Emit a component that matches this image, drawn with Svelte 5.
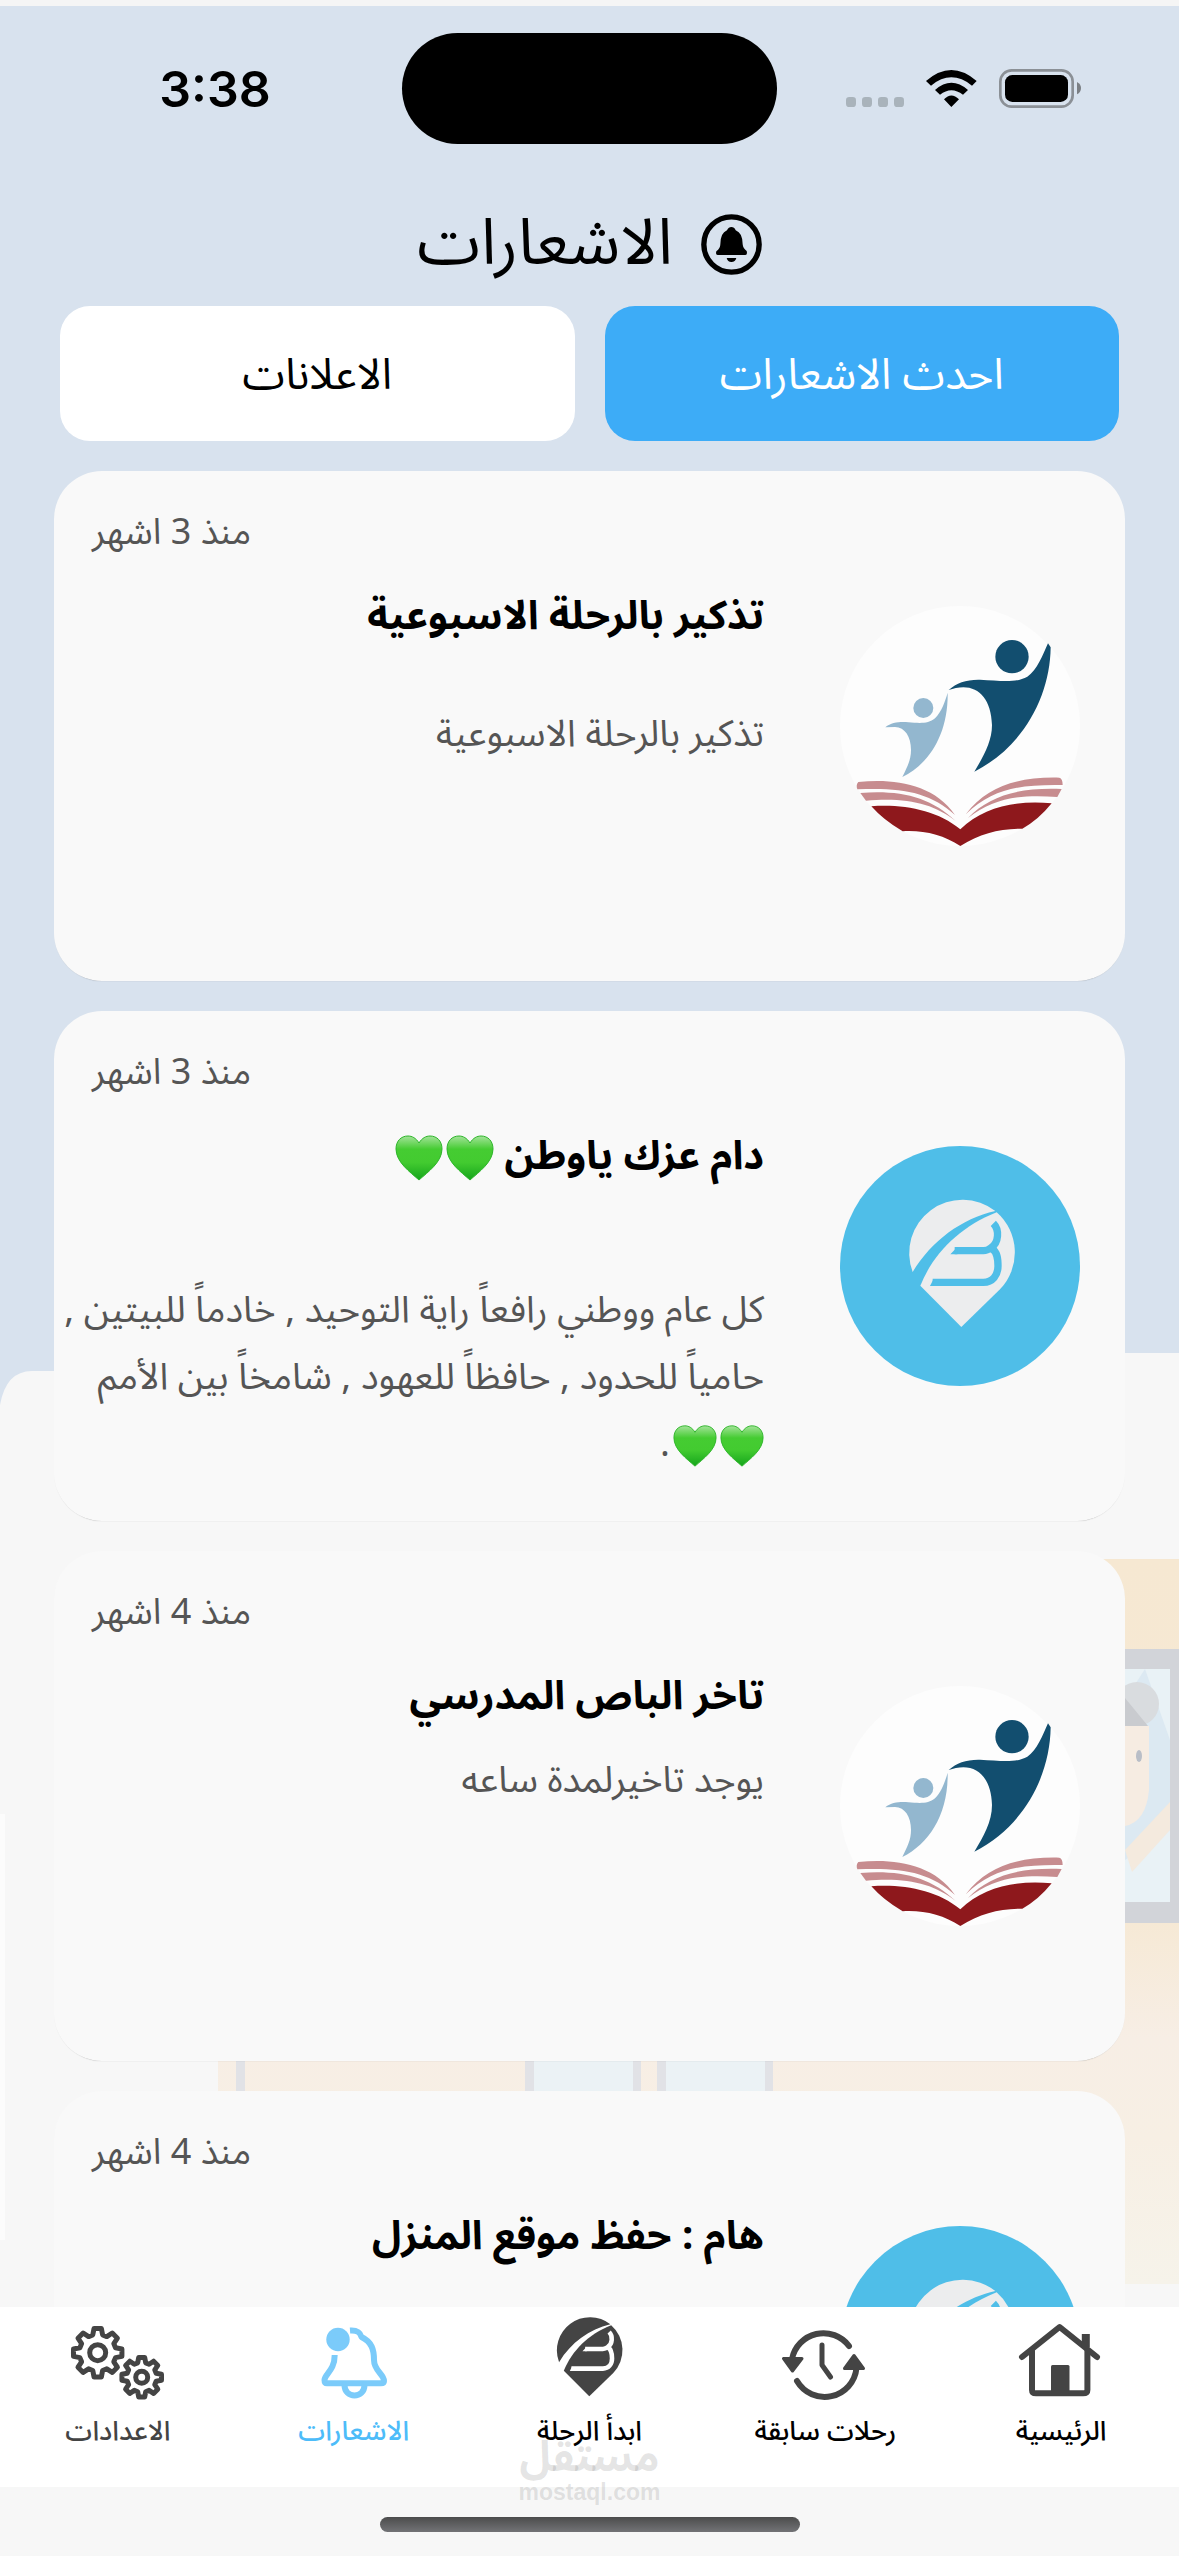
<script>
  let activeTab = $state('latest');

  const tabs = [
    { id: 'latest', label: 'احدث الاشعارات' },
    { id: 'ads', label: 'الاعلانات' }
  ];

  const notifications = [
    { logo: 'school', time: 'منذ 3 اشهر', title: 'تذكير بالرحلة الاسبوعية', hearts: 0, gap: 'medium', lines: ['تذكير بالرحلة الاسبوعية'] },
    {
      logo: 'bus',
      time: 'منذ 3 اشهر',
      title: 'دام عزك ياوطن',
      hearts: 2,
      gap: 'large',
      lines: ['كل عام ووطني رافعاً راية التوحيد , خادماً للبيتين ,', 'حامياً للحدود , حافظاً للعهود , شامخاً بين الأمم'],
      closing: true
    },
    { logo: 'school', time: 'منذ 4 اشهر', title: 'تاخر الباص المدرسي', hearts: 0, gap: 'small', lines: ['يوجد تاخيرلمدة ساعه'] },
    { logo: 'bus', time: 'منذ 4 اشهر', title: 'هام : حفظ موقع المنزل', hearts: 0, gap: 'small', lines: [] }
  ];

  const links = [
    { icon: 'home', label: 'الرئيسية', tone: 'dark' },
    { icon: 'history', label: 'رحلات سابقة', tone: 'dark' },
    { icon: 'pin', label: 'ابدأ الرحلة', tone: 'dark' },
    { icon: 'bell', label: 'الاشعارات', tone: 'active' },
    { icon: 'gears', label: 'الاعدادات', tone: 'soft' }
  ];

  // eight-toothed gear outline
  function gear(cx, cy, outer, inner) {
    const points = [];
    for (let i = 0; i < 8; i++) {
      const a = (i * Math.PI) / 4 - Math.PI / 2;
      for (const [da, r] of [[-0.27, inner], [-0.15, outer], [0.15, outer], [0.27, inner]]) {
        points.push(`${(cx + r * Math.cos(a + da)).toFixed(2)} ${(cy + r * Math.sin(a + da)).toFixed(2)}`);
      }
    }
    return `M${points.join('L')}Z`;
  }
</script>

{#snippet heart()}
  <svg class="heart" viewBox="0 0 48 48" role="img" aria-label="💚">
    <defs>
      <linearGradient id="heartFill" x1="0" y1="0" x2="0" y2="1">
        <stop offset="0" stop-color="#a4e39a" />
        <stop offset="0.3" stop-color="#45cc32" />
        <stop offset="0.6" stop-color="#43cb30" />
        <stop offset="1" stop-color="#15a51c" />
      </linearGradient>
    </defs>
    <path d="M24 9C21 4 17 2 13 2C6 2 1 7 1 15C1 28 15 38 24 46C33 38 47 28 47 15C47 7 42 2 35 2C31 2 27 4 24 9Z" fill="url(#heartFill)" stroke="#2db52a" />
  </svg>
{/snippet}

{#snippet pinMark(fill, cut)}
  <path d="M278 426A160 160 0 0 1 526 243C425 266 335 332 278 426Z" {fill} />
  <path d="M301 467C340 370 420 290 530 247A160 160 0 0 1 540 478L424 591Z" {fill} />
  <g fill="none" stroke={cut} stroke-width="22">
    <path d="M520 280C538 298 538 338 512 354Q502 362 490 362H404" />
    <path d="M515 355C532 366 534 385 534 408C534 435 518 457 490 457H338" />
  </g>
  <path d="M391 373L412 351V373ZM330 468L341 446V468Z" fill={cut} />
{/snippet}

{#snippet logo(kind)}
  <svg class="avatar" viewBox="60 48 720 720" aria-hidden="true">
    {#if kind === 'bus'}
      <circle cx="420" cy="408" r="360" fill="#4fbee8" />
      {@render pinMark('#ecedee', '#4fbee8')}
    {:else}
      <circle cx="420" cy="408" r="360" fill="#fdfdfd" />
      <g fill="#124e6f">
        <circle cx="576" cy="200" r="50" />
        <path d="M386 300C410 278 440 268 480 269C540 272 586 280 622 260C652 240 668 195 684 160L692 172C690 320 610 470 463 545C490 500 516 455 516 405C514 332 480 292 430 292C415 292 400 296 386 300Z" />
      </g>
      <g fill="#93b7cf">
        <circle cx="310" cy="354" r="30" />
        <path d="M196 412C215 397 240 395 265 397C300 400 325 402 345 385C365 365 375 335 383 308C385 430 330 520 247 561C262 530 273 510 273 480C273 440 255 412 225 411Z" />
      </g>
      <g fill="#c78c8f">
        <path d="M115 576C220 565 340 580 405 675C330 605 240 592 112 598Q107 585 115 576Z" />
        <path d="M121 609C240 600 330 620 408 694C340 640 260 622 138 632Z" />
        <path d="M438 672C500 590 590 560 718 563Q728 565 728 585C600 583 520 595 438 672Z" />
        <path d="M444 684C510 615 600 592 725 597L712 621C600 612 520 625 444 684Z" />
      </g>
      <path d="M154 649C250 642 350 660 421 718C490 650 590 630 695 640Q655 690 607 716C540 716 480 730 421 768C370 735 310 720 248 724Q190 690 154 649Z" fill="#8e181c" />
    {/if}
  </svg>
{/snippet}

{#snippet navIcon(name)}
  {#if name === 'pin'}
    <svg viewBox="186 193 483 435" aria-hidden="true">{@render pinMark('#444444', '#ffffff')}</svg>
  {:else}
    <svg viewBox="0 0 100 90" fill="none" stroke="#444444" stroke-width="6" stroke-linecap="round" stroke-linejoin="round" aria-hidden="true">
      {#if name === 'home'}
        <path d="M11 43L48.6 13L86 43" />
        <path d="M21 37V76Q21 79.300 25 79.300H72Q76.400 79.300 76.400 76V37" />
        <path d="M74.800 20V33" stroke-width="8" stroke-linecap="butt" />
        <rect x="40" y="51" width="18.500" height="29" rx="1.500" fill="#444444" stroke="none" />
      {:else if name === 'history'}
        <path d="M17 45A32 32 0 0 1 74 32M81.500 54A32 32 0 0 1 22 67" />
        <path d="M8.500 44.500H27L17.500 57ZM79 41.500L88.500 54.500H69.500Z" fill="#444444" stroke-width="3" />
        <path d="M47 31V51L55.500 63" stroke-width="5" />
      {:else if name === 'bell'}
        <g stroke="#7bcbfa">
          <circle cx="34" cy="25.500" r="11.700" fill="#7bcbfa" stroke="none" />
          <path d="M46 16.500C53 16 56 18 57.500 23C68 28 70 36 70 46C70 57 80 60 80 67Q80 69.300 77 69.300H23Q20.500 69.300 20.500 66C20.500 60 30.700 57 30.700 41" stroke-linecap="butt" />
          <path d="M40.500 71C40.500 85 60.500 85 60.500 71" />
        </g>
      {:else}
        <g stroke-width="5">
          <path d={gear(29.7, 38.7, 24.5, 18.5)} />
          <circle cx="29.700" cy="38.700" r="8" />
          <path d={gear(73.7, 63.3, 20, 15)} />
          <circle cx="73.700" cy="63.300" r="6" />
        </g>
      {/if}
    </svg>
  {/if}
{/snippet}

<div class="screen">
  <svg class="scene" viewBox="0 0 1179 2556" preserveAspectRatio="none" aria-hidden="true">
    <defs>
      <linearGradient id="wall" x1="0" y1="0" x2="0" y2="1">
        <stop offset="0" stop-color="#f6e8d2" />
        <stop offset="0.5" stop-color="#f6e9d5" />
        <stop offset="0.66" stop-color="#f7eee5" />
        <stop offset="0.8" stop-color="#f7efe4" />
        <stop offset="1" stop-color="#f6f3ea" />
      </linearGradient>
    </defs>
    <rect width="1179" height="2556" fill="#d8e2ee" />
    <rect width="1179" height="6" fill="#f5f5f5" />
    <path d="M0 1405Q6 1371 32 1371H590V1353H1179V2556H0Z" fill="#f7f7f7" />
    <rect x="0" y="1814" width="5" height="426" fill="#fcfcfc" />
    <path d="M1090 1559H1179V2284H218V1900H1090Z" fill="url(#wall)" />
    <rect x="1100" y="1649" width="79" height="274" fill="#d2d4d9" />
    <rect x="1100" y="1669" width="70" height="233" fill="#e9f2f6" />
    <path d="M1125 1700L1145 1669L1170 1740V1830L1125 1860Z" fill="#dce9f2" />
    <circle cx="1137" cy="1704" r="22" fill="#d9dcdf" />
    <path d="M1100 1726H1149V1790Q1146 1822 1125 1826H1100Z" fill="#f6ece2" />
    <path d="M1100 1690L1125 1698L1148 1726H1100Z" fill="#c9cbcf" />
    <ellipse cx="1139" cy="1756" rx="3" ry="6" fill="#b9bec7" />
    <path d="M1125 1850L1170 1802V1830L1132 1872Z" fill="#f4eade" />
    <g fill="#e1e2e6">
      <rect x="236" y="2040" width="9" height="80" />
      <rect x="525" y="2040" width="116" height="80" />
      <rect x="657" y="2040" width="116" height="80" />
    </g>
    <g fill="#ebf2f5">
      <rect x="534" y="2040" width="99" height="80" />
      <rect x="666" y="2040" width="99" height="80" />
    </g>
  </svg>

  <div class="status">
    <span class="clock">3:38</span>
    <span class="island"></span>
    <svg class="signals" viewBox="498 54 705 117" aria-hidden="true">
      <g fill="#a9b3bb">
        <rect x="498" y="138" width="30" height="30" rx="10" />
        <rect x="546" y="138" width="30" height="30" rx="10" />
        <rect x="594" y="138" width="30" height="30" rx="10" />
        <rect x="642" y="138" width="30" height="30" rx="10" />
      </g>
      <path d="M738 90Q814 24 890 90L876 104Q814 54 753 104ZM765 117Q814 74 864 117L849 131Q814 104 780 131ZM792 145Q814 122 837 145L814 168Z" />
      <rect x="961" y="58" width="217" height="109" rx="34" fill="none" stroke="#8b9096" stroke-width="8" />
      <rect x="975" y="72" width="189" height="81" rx="22" />
      <path d="M1191 93Q1203 99 1203 111Q1203 124 1191 130Z" fill="#7b7f84" />
    </svg>
  </div>

  <header>
    <svg class="title-bell" viewBox="54 489 183 183" aria-hidden="true">
      <circle cx="145.500" cy="580.500" r="83" fill="none" stroke="#000000" stroke-width="16" />
      <path d="M145 528Q154 528 158 538Q179 546 179 580Q180 592 191 600Q194 612 187 612H104Q97 612 100 601Q112 592 112 580Q112 546 132 538Q137 528 145 528ZM131 621H160Q157 633 145 633Q134 633 131 621Z" />
    </svg>
    <h1>الاشعارات</h1>
  </header>

  <div class="tabs">
    {#each tabs as tab}
      <button class:selected={activeTab === tab.id} onclick={() => (activeTab = tab.id)}>{tab.label}</button>
    {/each}
  </div>

  <main>
    {#each notifications as item}
      <article>
        {@render logo(item.logo)}
        <div class="content">
          <time>{item.time}</time>
          <h2>
            {item.title}
            {#if item.hearts}<span class="hearts">{@render heart()}{@render heart()}</span>{/if}
          </h2>
          <div class="message {item.gap}">
            {#each item.lines as line}
              <p>{line}</p>
            {/each}
            {#if item.closing}
              <p class="hearts">{@render heart()}{@render heart()}.</p>
            {/if}
          </div>
        </div>
      </article>
    {/each}
  </main>

  <nav>
    {#each links as link}
      <a href="#{link.icon}" class={link.tone}>
        {@render navIcon(link.icon)}
        <span>{link.label}</span>
      </a>
    {/each}
  </nav>

  <footer>
    <div class="watermark">
      <span class="brand">مستقل</span>
      <span class="site" dir="ltr">mostaql.com</span>
    </div>
    <span class="home-bar"></span>
  </footer>
</div>

<style>
  .screen {
    position: relative;
    display: flex;
    flex-direction: column;
    height: 100vh;
    overflow: hidden;
    direction: rtl;
    font-family: "Noto Sans Arabic", "Cairo", "DejaVu Sans", sans-serif;
    color: #000000;
  }

  .scene {
    position: absolute;
    inset: 0;
    width: 100%;
    height: 100%;
    z-index: -1;
  }

  .status {
    display: grid;
    grid-template-columns: 1fr 375px 1fr;
    align-items: center;
    justify-items: center;
    direction: ltr;
    padding-top: 33px;
  }

  .clock {
    padding-left: 28px;
    font-family: Inter, sans-serif;
    font-size: 50px;
    font-weight: 600;
  }

  .island {
    width: 100%;
    height: 111px;
    border-radius: 56px;
    background: #000000;
  }

  .signals {
    width: 235px;
    height: 39px;
    margin-right: 30px;
  }

  header {
    display: flex;
    align-items: center;
    justify-content: center;
    gap: 28px;
    height: 100px;
    margin: 50px 0 12px;
  }

  .title-bell {
    width: 61px;
    height: 61px;
  }

  h1 {
    margin: 0;
    font-size: 64px;
    font-weight: 400;
    line-height: 100px;
  }

  .tabs {
    display: grid;
    grid-template-columns: 1fr 1fr;
    gap: 30px;
    padding: 0 60px 30px;
  }

  .tabs button {
    height: 135px;
    padding: 4px 0 0;
    border: none;
    border-radius: 30px;
    background: #ffffff;
    color: #000000;
    font-family: inherit;
    font-size: 43px;
  }

  .tabs .selected {
    background: #3dacf7;
    color: #ffffff;
  }

  main {
    flex: 1;
    min-height: 0;
    display: flex;
    flex-direction: column;
    gap: 30px;
    padding: 0 54px;
    overflow: hidden;
  }

  article {
    flex: none;
    display: flex;
    align-items: center;
    gap: 76px;
    height: 510px;
    padding-right: 45px;
    border-radius: 48px;
    background: #f9f9f9;
    box-shadow: 0 1px 1px -1px rgba(0, 0, 0, 0.3);
  }

  .avatar {
    flex: none;
    width: 240px;
    height: 240px;
  }

  .content {
    flex: 1;
    align-self: stretch;
    display: flex;
    flex-direction: column;
    padding-top: 32px;
    white-space: nowrap;
  }

  time {
    align-self: flex-end;
    padding-left: 38px;
    font-size: 36px;
    line-height: 60px;
    color: #555555;
  }

  h2 {
    margin: 20px 0 0;
    font-size: 40px;
    font-weight: 700;
    line-height: 68px;
  }

  .message {
    font-size: 37px;
    line-height: 67px;
    color: #555555;
  }

  .message p {
    margin: 0;
  }

  .small {
    margin-top: 16px;
  }

  .medium {
    margin-top: 50px;
  }

  .large {
    margin-top: 86px;
  }

  .heart {
    width: 48px;
    height: 48px;
    margin-left: 3px;
    vertical-align: middle;
  }

  .message .heart {
    width: 44px;
    height: 44px;
  }

  nav {
    display: grid;
    grid-template-columns: repeat(5, 1fr);
    height: 180px;
    background: #ffffff;
  }

  nav a {
    display: flex;
    flex-direction: column;
    align-items: center;
    gap: 8px;
    padding-top: 7px;
    font-size: 27px;
    font-weight: 500;
    line-height: 40px;
    white-space: nowrap;
    text-decoration: none;
  }

  nav svg {
    width: 100px;
    height: 90px;
  }

  .dark {
    color: #000000;
  }

  .active {
    color: #4dbcf9;
  }

  .soft {
    color: #444444;
  }

  footer {
    position: relative;
    display: flex;
    align-items: flex-start;
    justify-content: center;
    height: 39px;
    padding-top: 30px;
  }

  .home-bar {
    width: 420px;
    height: 15px;
    border-radius: 8px;
    background: linear-gradient(#4c4c4c, #727376);
  }

  .watermark {
    position: absolute;
    bottom: 52px;
    display: flex;
    flex-direction: column;
    align-items: center;
    color: rgba(120, 120, 120, 0.2);
    font-weight: 700;
  }

  .brand {
    font-size: 42px;
    line-height: 44px;
  }

  .site {
    font-family: "Liberation Sans", sans-serif;
    font-size: 23px;
    line-height: 24px;
  }
</style>
